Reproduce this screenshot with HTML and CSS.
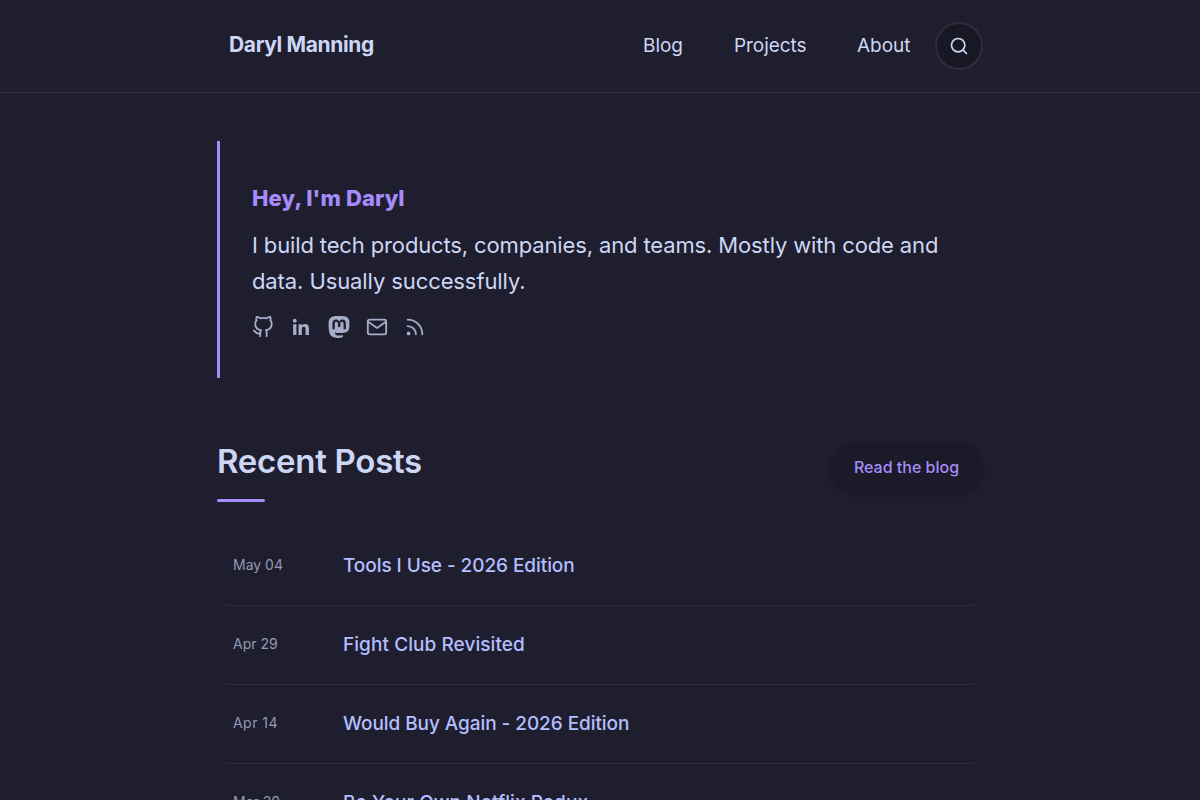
FILE: index.html
```html
<!DOCTYPE html>
<html lang="en">
<head>
    <meta charset="UTF-8">
    <meta name="viewport" content="width=device-width, initial-scale=1.0">
    <title>Daryl Manning</title>
    <link rel="stylesheet" href="styles.css">
</head>
<body>
    <header class="site-header">
        <div class="header-inner">
            <a class="site-title" href="#">Daryl Manning</a>
            <nav class="site-nav">
                <a class="nav-link nav-blog" href="#">Blog</a>
                <a class="nav-link nav-projects" href="#">Projects</a>
                <a class="nav-link nav-about" href="#">About</a>
                <button class="search-button" aria-label="Search">
                    <svg width="20" height="20" viewBox="0 0 24 24" fill="none" stroke="currentColor" stroke-width="2" stroke-linecap="round" stroke-linejoin="round"><circle cx="11" cy="11" r="8"/><path d="m21 21-4.35-4.35"/></svg>
                </button>
            </nav>
        </div>
    </header>

    <main class="container">
        <section class="hero">
            <h1 class="hero-title">Hey, I'm Daryl</h1>
            <p class="hero-text"><span class="line-one">I build tech products, companies, and teams. Mostly with code and</span> <span class="line-two">data. Usually successfully.</span></p>
            <div class="social">
                <a href="#" aria-label="GitHub"><svg class="icon" viewBox="0 0 24 24"><path d="M9 19c-5 1.5-5-2.5-7-3m14 6v-3.87a3.37 3.37 0 0 0-.94-2.61c3.14-.35 6.44-1.54 6.44-7A5.44 5.44 0 0 0 20 4.77 5.07 5.07 0 0 0 19.91 1S18.73.65 16 2.48a13.38 13.38 0 0 0-7 0C6.27.65 5.09 1 5.09 1A5.07 5.07 0 0 0 5 4.77a5.44 5.44 0 0 0-1.5 3.78c0 5.42 3.3 6.61 6.44 7A3.37 3.37 0 0 0 9 18.13V22"/></svg></a>
                <a href="#" aria-label="LinkedIn"><svg class="icon icon-solid" viewBox="0 0 24 24"><circle cx="5.2" cy="5.2" r="2.1"/><path d="M3.4 8.9H7V20.7H3.4zM9.3 8.9h3.5v1.6c.5-.95 1.7-1.9 3.5-1.9 3.7 0 4.4 2.4 4.4 5.6v6.5H17v-5.8c0-1.4 0-3.1-1.9-3.1s-2.2 1.5-2.2 3v5.9H9.3z"/></svg></a>
                <a href="#" aria-label="Mastodon"><svg class="icon icon-solid" viewBox="0 0 24 24"><path d="M23.268 5.313c-.35-2.578-2.617-4.61-5.304-5.004C17.51.242 15.792 0 11.813 0h-.03c-3.98 0-4.835.242-5.288.309C3.882.692 1.496 2.518.917 5.127.64 6.412.61 7.837.661 9.143c.074 1.874.088 3.745.26 5.611.118 1.24.325 2.47.62 3.68.55 2.237 2.777 4.098 4.96 4.857 2.336.792 4.849.923 7.256.38.265-.061.527-.132.786-.213.585-.184 1.27-.39 1.774-.753a.057.057 0 0 0 .023-.043v-1.809a.052.052 0 0 0-.02-.041.053.053 0 0 0-.046-.01 20.282 20.282 0 0 1-4.709.545c-2.73 0-3.463-1.284-3.674-1.818a5.593 5.593 0 0 1-.319-1.433.053.053 0 0 1 .066-.054c1.517.363 3.072.546 4.632.546.376 0 .75 0 1.125-.01 1.57-.044 3.224-.124 4.768-.422.038-.008.077-.015.11-.024 2.435-.464 4.753-1.92 4.989-5.604.008-.145.03-1.52.03-1.67.002-.512.167-3.63-.024-5.545zm-3.748 9.195h-2.561V8.29c0-1.309-.55-1.976-1.67-1.976-1.23 0-1.846.79-1.846 2.35v3.403h-2.546V8.663c0-1.56-.617-2.35-1.848-2.35-1.112 0-1.668.668-1.67 1.977v6.218H4.822V8.102c0-1.31.337-2.35 1.011-3.12.696-.77 1.608-1.164 2.74-1.164 1.311 0 2.302.5 2.962 1.498l.638 1.06.638-1.06c.66-.999 1.65-1.498 2.96-1.498 1.13 0 2.043.395 2.74 1.164.675.77 1.012 1.81 1.012 3.12z"/></svg></a>
                <a href="#" aria-label="Email"><svg class="icon" viewBox="0 0 24 24"><rect x="2" y="4" width="20" height="16" rx="2"/><path d="m2 6 10 7 10-7"/></svg></a>
                <a href="#" aria-label="RSS"><svg class="icon" viewBox="0 0 24 24"><path d="M4 11a9 9 0 0 1 9 9"/><path d="M4 4a16 16 0 0 1 16 16"/><circle cx="5" cy="19" r="1"/></svg></a>
            </div>
        </section>

        <section class="recent">
            <div class="section-header">
                <h2 class="section-title">Recent Posts</h2>
                <a class="blog-button" href="#">Read the blog</a>
            </div>
            <ul class="post-list">
                <li class="post"><time class="post-date">May 04</time><a class="post-link" href="#">Tools I Use - 2026 Edition</a></li>
                <li class="post"><time class="post-date">Apr 29</time><a class="post-link wide" href="#">Fight Club Revisited</a></li>
                <li class="post"><time class="post-date wide-date">Apr 14</time><a class="post-link" href="#">Would Buy Again - 2026 Edition</a></li>
                <li class="post"><time class="post-date">Mar 30</time><a class="post-link wide" href="#">Be Your Own Netflix Redux</a></li>
            </ul>
        </section>
    </main>
</body>
</html>
```
FILE: styles.css
```css
* {
    box-sizing: border-box;
}
body {
    margin: 0;
    height: 100vh;
    overflow: hidden;
    font-family: Inter, "Liberation Sans", sans-serif;
    background-color: #1e1e2e;
    color: #cdd6f4;
}
a {
    color: inherit;
    text-decoration: none;
}
.site-header {
    height: 93px;
    border-bottom: 1px solid #313244;
}
.header-inner {
    width: 766px;
    height: 92px;
    margin: 0 auto;
    padding-left: 12px;
    display: flex;
    justify-content: space-between;
    align-items: center;
}
.site-title {
    font-size: 21px;
    font-weight: 700;
    letter-spacing: -0.35px;
    padding-bottom: 3px;
}
.site-nav {
    display: flex;
    align-items: center;
}
.nav-link {
    font-size: 19px;
    letter-spacing: -0.05px;
    padding-bottom: 1px;
    white-space: nowrap;
}
.nav-blog {
    width: 91px;
}
.nav-projects {
    width: 123px;
}
.nav-about {
    width: 78px;
}
.search-button {
    width: 48px;
    height: 48px;
    padding: 0;
    display: flex;
    justify-content: center;
    align-items: center;
    border: 2px solid #2d2d3e;
    border-radius: 50%;
    background-color: #181825;
    color: #cdd6f4;
}
.container {
    width: 766px;
    margin: 48px auto 0;
}
.hero {
    height: 237px;
    padding: 41px 32px 0;
    border-left: 3px solid #a78bfa;
}
.hero-title {
    margin: 0;
    font-size: 22px;
    line-height: 32px;
    font-weight: 800;
    letter-spacing: 0.1px;
    color: #a78bfa;
}
.hero-text {
    margin: 13px 0 0;
    font-size: 22px;
    line-height: 36px;
    white-space: nowrap;
}
.line-one,
.line-two {
    display: block;
}
.line-one {
    letter-spacing: -0.135px;
}
.line-two {
    letter-spacing: -0.1px;
}
.social {
    display: flex;
    gap: 16px;
    margin-top: 17px;
    color: #a6adc8;
}
.icon {
    display: block;
    width: 22px;
    height: 22px;
    fill: none;
    stroke: currentColor;
    stroke-width: 2;
    stroke-linecap: round;
    stroke-linejoin: round;
}
.icon-solid {
    fill: currentColor;
    stroke: none;
}
.recent {
    margin-top: 63px;
}
.section-header {
    display: flex;
    justify-content: space-between;
    align-items: flex-start;
}
.section-title {
    margin: 0;
    font-size: 33px;
    line-height: 40px;
    font-weight: 600;
    letter-spacing: -0.28px;
}
.section-title::after {
    content: "";
    display: block;
    width: 48px;
    height: 3px;
    margin-top: 18px;
    border-radius: 2px;
    background-color: #a78bfa;
}
.blog-button {
    width: 153px;
    height: 52px;
    margin-top: 1px;
    line-height: 51px;
    border-radius: 26px;
    background-color: #1a1a28;
    box-shadow: 0 2px 4px rgba(0, 0, 0, 0.1);
    color: #a78bfa;
    font-size: 16px;
    font-weight: 500;
    text-align: center;
}
.post-list {
    list-style-type: none;
    margin: 25px 0 0;
    padding: 0;
}
.post {
    height: 79px;
    padding: 0 16px 2px;
    display: flex;
    align-items: center;
    border-bottom: 1px solid #2d2d3e;
    border-radius: 12px;
}
.post-date {
    width: 110px;
    padding-bottom: 2px;
    font-size: 14px;
    color: #9399b2;
}
.wide-date {
    letter-spacing: 0.45px;
}
.post-link {
    font-size: 19px;
    font-weight: 500;
    letter-spacing: -0.07px;
    color: #b4befe;
}
.wide {
    letter-spacing: 0.07px;
}
```
